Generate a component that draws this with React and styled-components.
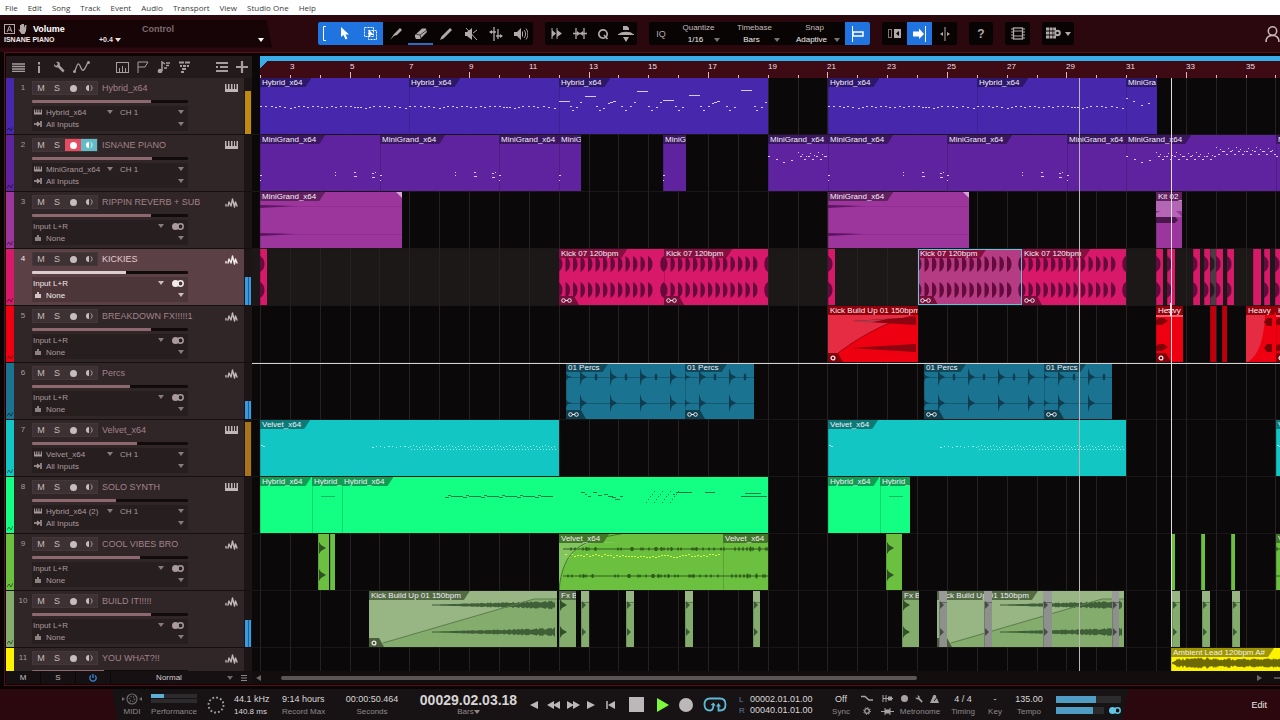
import React, { useEffect, useState } from 'react';
import styled, { createGlobalStyle } from 'styled-components';

const BAR = 448 / 15;
const FIRST_BAR = 2;
const TIMELINE_LEFT = 260;
const barX = bar => Math.round((bar - FIRST_BAR) * BAR);
const countBars = () => Math.floor((window.innerWidth - TIMELINE_LEFT) / BAR) + 1;
const noise = i => Math.abs(Math.sin(i * 12.9898) * 43758.5453) % 1;

/* ---------- data ---------- */

const menus = ['File', 'Edit', 'Song', 'Track', 'Event', 'Audio', 'Transport', 'View', 'Studio One', 'Help'];

const tracks = [
  { name: 'Hybrid_x64', color: '#4727ab', midi: 'Hybrid_x64', volume: 76, meter: 43, meterColor: '#c08a12' },
  { name: 'ISNANE PIANO', color: '#5f239f', midi: 'MiniGrand_x64', volume: 77, armed: true },
  { name: 'RIPPIN REVERB + SUB', color: '#9c359c', volume: 76 },
  { name: 'KICKIES', color: '#d81868', volume: 60, selected: true, meter: 28, meterColor: '#3a9ae0' },
  { name: 'BREAKDOWN FX!!!!!1', color: '#ee0010', volume: 76 },
  { name: 'Percs', color: '#1a7491', volume: 63, meter: 18, meterColor: '#3a9ae0' },
  { name: 'Velvet_x64', color: '#12c6c3', midi: 'Velvet_x64', volume: 67, meter: 54, meterColor: '#a8741a' },
  { name: 'SOLO SYNTH', color: '#13ff84', midi: 'Hybrid_x64 (2)', volume: 54 },
  { name: 'COOL VIBES BRO', color: '#6bc040', volume: 69 },
  { name: 'BUILD IT!!!!!', color: '#84ac6d', volume: 76, meter: 27, meterColor: '#3a9ae0' },
  { name: 'YOU WHAT?!!', color: '#fdf200', volume: 46 },
];

// start and end are distances from bar 2
const clip = (start, end, label, art, extra) => ({ start, end, label, art, ...extra });

const lanes = [
  [
    clip(0, 149, 'Hybrid_x64', 'arp'),
    clip(149, 299, 'Hybrid_x64', 'arp'),
    clip(299, 508, 'Hybrid_x64', 'lead'),
    clip(568, 717, 'Hybrid_x64', 'arp'),
    clip(717, 866, 'Hybrid_x64', 'arp'),
    clip(866, 897, 'MiniGra', 'sparse'),
  ],
  [
    clip(0, 120, 'MiniGrand_x64', 'chords'),
    clip(120, 239, 'MiniGrand_x64', 'chords'),
    clip(239, 299, 'MiniGrand_x64', 'chords'),
    clip(299, 321, 'MiniG', 'chords'),
    clip(403, 426, 'MiniG', 'chords'),
    clip(508, 568, 'MiniGrand_x64', 'melody'),
    clip(568, 687, 'MiniGrand_x64', 'chords'),
    clip(687, 807, 'MiniGrand_x64', 'chords'),
    clip(807, 866, 'MiniGrand_x64', 'chords'),
    clip(866, 1016, 'MiniGrand_x64', 'melody'),
    clip(1016, 1120, 'MiniGrand_x64', 'melody'),
  ],
  [
    clip(0, 142, 'MiniGrand_x64', 'tail'),
    clip(568, 709, 'MiniGrand_x64', 'tail'),
    clip(896, 922, 'Kit 02_', 'hit'),
  ],
  [
    clip(0, 7, '', 'bump'),
    clip(299, 404, 'Kick 07 120bpm', 'kicks', { badge: 'link' }),
    clip(404, 508, 'Kick 07 120bpm', 'kicks', { badge: 'link' }),
    clip(568, 575, '', 'bump'),
    clip(658, 762, 'Kick 07 120bpm', 'kicks', { badge: 'link', selected: true }),
    clip(762, 866, 'Kick 07 120bpm', 'kicks', { badge: 'link' }),
    clip(896, 903, '', 'bump'),
    clip(907, 915, '', 'bump'),
    clip(933, 940, '', 'bump'),
    clip(944, 950, '', 'bump'),
    clip(950, 956, '', 'bump', { muted: true }),
    clip(956, 963, '', 'bump'),
    clip(967, 974, '', 'bump'),
    clip(993, 1001, ''),
    clip(1004, 1010, '', 'bump'),
    clip(1015, 1024, '', 'bump'),
  ],
  [
    clip(568, 658, 'Kick Build Up 01 150bpm', 'riser', { badge: 'loop' }),
    clip(896, 923, 'Heavy', 'stab', { badge: 'loop' }),
    clip(950, 956, '', null, { dim: true }),
    clip(962, 967, '', null, { dim: true }),
    clip(986, 1016, 'Heavy', 'stabFade'),
    clip(1016, 1060, 'Heavy', 'stab', { badge: 'loop' }),
  ],
  [
    clip(306, 425, '01 Percs', 'percs', { badge: 'link' }),
    clip(425, 494, '01 Percs', 'percs', { badge: 'link' }),
    clip(664, 784, '01 Percs', 'percs', { badge: 'link' }),
    clip(784, 852, '01 Percs', 'percs', { badge: 'link' }),
  ],
  [
    clip(0, 299, 'Velvet_x64', 'pads'),
    clip(568, 866, 'Velvet_x64', 'pads'),
    clip(1016, 1100, 'Velvet_x64', 'pads'),
  ],
  [
    clip(0, 52, 'Hybrid_x64'),
    clip(52, 82, 'Hybrid_', 'hold'),
    clip(82, 508, 'Hybrid_x64', 'solo'),
    clip(568, 620, 'Hybrid_x64'),
    clip(620, 650, 'Hybrid_', 'hold'),
  ],
  [
    clip(58, 69, '', 'burst'),
    clip(70, 75, ''),
    clip(299, 463, 'Velvet_x64', 'velvetFade'),
    clip(463, 508, 'Velvet_x64', 'velvet'),
    clip(626, 642, '', 'burst'),
    clip(911, 915, ''),
    clip(941, 945, ''),
    clip(971, 975, ''),
    clip(1016, 1060, 'Velvet_x64', 'velvet'),
  ],
  [
    clip(109, 297, 'Kick Build Up 01 150bpm', 'build', { badge: 'loop' }),
    clip(299, 316, 'Fx B', 'burst'),
    clip(321, 329, '', 'chop'),
    clip(366, 374, '', 'chop'),
    clip(425, 433, '', 'chop'),
    clip(493, 500, '', 'chop'),
    clip(642, 659, 'Fx B', 'burst'),
    clip(677, 864, 'Kick Build Up 01 150bpm', 'build', { badge: 'loop' }),
    clip(679, 687, '', 'chop', { muted: true }),
    clip(724, 732, '', 'chop', { muted: true }),
    clip(783, 792, '', 'chop', { muted: true }),
    clip(852, 859, '', 'chop', { muted: true }),
    clip(912, 920, '', 'chop'),
    clip(942, 950, '', 'chop'),
    clip(972, 980, '', 'chop'),
  ],
  [clip(911, 1100, 'Ambient Lead 120bpm A#', 'ambient')],
];

/* ---------- clip drawings ---------- */

const ARP = [
  [0, 28], [5, 28], [11, 28], [15, 29], [19, 28], [24, 29], [30, 30], [34, 29], [38, 28], [43, 28], [47, 29],
  [52, 28], [57, 28], [61, 29], [66, 29], [71, 28], [75, 29], [80, 28], [85, 28], [90, 28], [94, 29], [97, 29],
  [100, 29], [105, 30], [109, 29], [113, 28], [119, 28], [124, 28], [128, 29], [134, 28], [139, 29], [145, 30],
];

const LEAD = [
  [0, 23, 11], [11, 28], [13, 32], [17, 29], [21, 24], [26, 18, 11], [37, 28], [40, 32], [44, 30], [49, 25],
  [51, 24, 3], [54, 23, 3], [62, 28], [66, 32], [71, 28], [75, 24], [78, 13, 11], [89, 28], [92, 32], [97, 29],
  [101, 24], [104, 22, 11], [116, 28], [119, 32], [123, 29], [130, 17, 11], [141, 28], [144, 32], [149, 28],
  [153, 25], [155, 24, 3], [158, 23, 3], [167, 28], [170, 32], [175, 29], [182, 12, 11], [195, 28], [197, 32],
  [202, 29], [206, 24],
];

const CHORDS = [
  [0, 40], [0, 45, 1], [75, 37, 1], [75, 40, 1], [94, 37], [94, 41, 3], [112, 38], [112, 42, 3], [115, 37, 1],
];

const MELODY = [[0, 21], [8, 24], [15, 27], [23, 25]];
for (let i = 0; i < 30; i += 1) {
  const lift = i > 14 ? -5 : 0;
  MELODY.push([30 + i * 4, 17 + lift + ((i * 2) % 5), 1], [32 + i * 4, 21 + lift + ((i * 3) % 6), 2]);
}

const PADS = [[1, 25], [3, 26]];
for (let i = 0; i < 10; i += 1) PADS.push([112 + i * 4, 26 + (i % 3 ? 0 : 1), i % 4 ? 1 : 2]);
for (let i = 0; i < 49; i += 1) {
  PADS.push([150 + i * 3, 26 - (i % 4 === 1 ? 1 : 0) + (i % 4 === 3 ? 1 : 0), 1], [151 + i * 3, 29, 1]);
}

const SOLO = [];
for (let i = 0; i < 18; i += 1) SOLO.push([103 + i * 6, 19 + (i % 3 ? 0 : 1), 4], [106 + i * 6, i % 3 ? 19 : 18, 3]);
SOLO.push([239, 15, 4], [243, 17, 2], [246, 19, 3], [251, 15, 4], [256, 18, 4], [262, 17, 4], [266, 19, 5]);
SOLO.push([270, 20, 4], [273, 22, 5], [278, 19, 3], [334, 15, 16], [331, 17, 2], [363, 15, 10], [399, 19, 26], [403, 16, 16]);
for (let i = 0; i < 4; i += 1) {
  [25, 22, 19, 17, 14].forEach((y, j) => SOLO.push([304 + i * 8 + j * 2, y, 1]));
}

const Notes = ({ notes, color = '#d9c8ff' }) =>
  notes.map(([x, y, w = 2], i) => <rect key={i} x={x} y={y} width={w} height="1" fill={color} />);

// symmetric wave outline around a centre line
const wave = (x0, x1, y, amp) => {
  let top = `M${x0} ${y}`;
  let bottom = '';
  for (let x = x0; x <= x1; x += 1) {
    const a = amp(x, (x - x0) / (x1 - x0));
    top += `L${x} ${y - a}`;
    bottom = `L${x} ${y + a}${bottom}`;
  }
  return `${top}${bottom}Z`;
};

const drawings = {
  arp: () => <Notes notes={ARP} />,
  lead: () => <Notes notes={LEAD} />,
  sparse: () => <Notes notes={[[0, 20], [7, 23], [15, 27], [22, 25]]} />,
  chords: () => <Notes notes={CHORDS} />,
  melody: () => <Notes notes={MELODY} />,
  pads: () => <Notes notes={PADS} color="#98f5f2" />,
  hold: () => <Notes notes={[[9, 19, 14]]} color="#0bb862" />,
  solo: () => <Notes notes={SOLO} color="#0a7a45" />,
  tail: w => (
    <>
      {[14, 42].map(y => (
        <g key={y}>
          <path d={`M0 ${y - 1}L36 ${y}L0 ${y + 2}Z`} fill="#5c1560" />
          <path d={`M30 ${y + 0.5}H${w}`} stroke="#8a2a8b" strokeWidth="0.6" />
        </g>
      ))}
      <path d={`M${w - 6} 0H${w}V6Z`} fill="#d7a3d8" />
      <path d="M0 0H5L0 5Z" fill="#d7a3d8" />
    </>
  ),
  hit: w => (
    <>
      <rect y="9" width={w} height="10" fill="#b366b4" />
      <path d={`M0 25V21L5 19H${w - 6}L${w} 25Z`} fill="#b366b4" />
      <path d={`M0 25H${w - 7}L${w - 4} 28L${w - 7} 31H0Z`} fill="#4a164e" />
    </>
  ),
  kicks: w => (
    <g fill="#650a3c">
      {[15, 41].map(y => (
        <g key={y}>
          {Array.from({ length: 13 }, (_, i) => (
            <path key={i} d={`M${i * 7.5 - 1} ${y - 8}C${i * 7.5 + 5} ${y - 5} ${i * 7.5 + 5} ${y + 5} ${i * 7.5 - 1} ${y + 8}Z`} />
          ))}
          <path d={`M${w} ${y - 8}C${w - 5} ${y - 6} ${w - 5} ${y + 6} ${w} ${y + 8}Z`} />
        </g>
      ))}
    </g>
  ),
  bump: () => (
    <g fill="#650a3c">
      {[15, 41].map(y => (
        <path key={y} d={`M0 ${y - 8}C6 ${y - 5} 6 ${y + 5} 0 ${y + 8}Z`} />
      ))}
    </g>
  ),
  riser: w => (
    <>
      <path d={`M0 9H${w - 3}C60 14 30 32 10 47L0 56Z`} fill="#e52c42" />
      <path d={`M24 15L${w - 2} 11V19Z`} fill="#8c0510" />
      <path d={`M22 42L${w - 2} 38V46Z`} fill="#8c0510" />
      <path d={`M${w - 3} 10C60 14 30 32 10 47`} stroke="#8c0510" fill="none" strokeWidth="0.8" />
      <path d="M24 15L60 13L40 17Z" fill="#b3384a" />
    </>
  ),
  stab: () => (
    <>
      <rect y="9" width="27" height="2" fill="#f2606c" />
      {[16, 42].map(y => (
        <path key={y} d={`M0 ${y - 2}L3 ${y - 4}H8L12 ${y - 1}L6 ${y + 3}H0Z`} fill="#83000a" />
      ))}
    </>
  ),
  stabFade: () => (
    <>
      <path d="M0 9H19C18 30 14 48 2 56H0Z" fill="#e52c42" />
      {[16, 42].map(y => (
        <path key={y} d={`M18 ${y}L21 ${y - 4}H26V${y + 4}H21Z`} fill="#7a0008" />
      ))}
    </>
  ),
  percs: w => (
    <g fill="#103d50">
      {[14, 40].map(y => (
        <g key={y}>
          <path d={`M0 ${y - 4}L2 ${y - 1}L6 ${y}L2 ${y + 1}L0 ${y + 4}Z`} />
          {[14, 44, 74, 104].map(x => (
            <path key={x} d={`M${x} ${y - 9}L${x + 2} ${y - 3}L${x + 7} ${y}L${x + 2} ${y + 3}L${x} ${y + 9}Z`} />
          ))}
          <rect y={y} width={w} height="0.5" />
        </g>
      ))}
      {[30, 60, 90].map(x => (
        <ellipse key={x} cx={x} cy="14" rx="1.3" ry="3.5" />
      ))}
    </g>
  ),
  velvet: w => (
    <path d={wave(0, w, 15, x => (noise(x) > 0.75 ? 2.5 : 0.6)) + wave(0, w, 42, x => (noise(x + 3) > 0.75 ? 2.5 : 0.6))} fill="#315c1b" />
  ),
  velvetFade: w => (
    <>
      <path d="M0 9H62C25 4 5 15 0 56Z" fill="#83c561" />
      <path d={wave(4, w, 15, x => (noise(x) > 0.8 ? 2 : 0.6)) + wave(4, w, 42, x => (noise(x + 3) > 0.8 ? 2 : 0.6))} fill="#315c1b" />
      {Array.from({ length: 52 }, (_, i) => (
        <rect key={i} x={6 + i * 3} y={20 + Math.round(noise(i) * 3)} width="2" height="1" fill="#d4fa3c" />
      ))}
      <path d="M0 56C4 15 22 6 62 0" stroke="#45772b" fill="none" />
    </>
  ),
  burst: () => (
    <g fill="#2f4f27">
      {[14, 41].map(y => (
        <path key={y} d={`M1 ${y - 6}L3 ${y - 3}L8 ${y}L3 ${y + 3}L1 ${y + 6}Z`} />
      ))}
    </g>
  ),
  build: w => (
    <>
      <path d={`M0 0H${w}V8H165L14 52H0Z`} fill="#98b584" />
      <path
        d={wave(63, w - 2, 14, (x, t) => 0.4 + t * (2 + noise(x) * 2.4)) + wave(63, w - 2, 41, (x, t) => 0.4 + t * (2 + noise(x + 9) * 2.4))}
        fill="#3f5f38"
      />
      <path d={`M14 52L165 8H${w}`} stroke="#5c7c4c" fill="none" />
    </>
  ),
  chop: w => (
    <>
      <rect width={w} height="11" fill="#98b584" />
      <rect y="11" width={w} height="1" fill="#5c7c4c" />
      {[14, 41].map(y => (
        <path key={y} d={`M1 ${y - 4}L5 ${y}L1 ${y + 4}Z`} fill="#3c5a35" />
      ))}
    </>
  ),
  ambient: w => <path d={wave(1, w, 15, x => (x < 6 ? x / 2 : 2.5 + noise(x) * 3 * (x < 60 ? 1 : 0.7)))} fill="#6d6a06" />,
};

/* ---------- icons ---------- */

const Svg = ({ w = 14, h = 14, box, children }) => (
  <svg width={w} height={h} viewBox={box || `0 0 ${w} ${h}`} fill="none" stroke="currentColor" aria-hidden="true">
    {children}
  </svg>
);

const fill = { fill: 'currentColor', stroke: 'none' };

const Caret = () => <Svg w={6} h={4}><path d="M0 0H6L3 4Z" {...fill} /></Svg>;
const PianoIcon = ({ w = 13, h = 8 }) => (
  <Svg w={w} h={h} box="0 0 13 8">
    <path d="M0 0H1.500V5H3V0H4.500V5H6V0H7.500V5H9V0H10V5H11.500V0H13V8H0Z" {...fill} />
  </Svg>
);
const WaveIcon = () => (
  <Svg w={13} h={11}>
    <path d="M1 8V6.5M3 8L4 4L6 8L7.5 1L9.500 9L10.500 4L12 8" strokeWidth="1.4" strokeLinejoin="round" strokeLinecap="round" />
  </Svg>
);
const InIcon = () => <Svg w={8} h={6}><path d="M0 3H5M3 1L5.5 3L3 5" strokeWidth="1.4" /><path d="M7 0V6" strokeWidth="1.5" /></Svg>;
const OutIcon = () => <Svg w={6} h={6}><path d="M1 2V6M3 0V6M5 2V6" strokeWidth="1.6" /></Svg>;
const StereoIcon = () => (
  <Svg w={12} h={7}><circle cx="3.5" cy="3.5" r="3.5" {...fill} /><circle cx="8.5" cy="3.5" r="2.7" strokeWidth="1.5" /></Svg>
);
const RecordIcon = () => <Svg w={7} h={7}><circle cx="3.5" cy="3.5" r="3.5" {...fill} /></Svg>;
const MonitorIcon = () => (
  <Svg w={8} h={8}><path d="M4 1A3 3 0 0 0 4 7Z" {...fill} /><path d="M5.5 1.2A3.2 3.2 0 0 1 5.5 6.8" strokeWidth="0.8" /></Svg>
);
const WrenchIcon = ({ size = 12 }) => (
  <Svg w={size} h={size} box="0 0 12 12">
    <path d="M1 3L3 5L5 3L3.2 1C6 0 7.5 2 6.8 4.5L11.5 9.5L10 11.5L5 6.5C2.5 7 .5 5.5 1 3Z" {...fill} />
  </Svg>
);

const headerIcons = [
  ['Track list', <Svg w={13} h={9}><path d="M0 1H13M0 3.5H13M0 6H13M0 8.5H13" strokeWidth="1.3" /></Svg>],
  ['Inspector', <Svg w={4} h={11}><path d="M2 4V11M2 0V2.5" strokeWidth="2" /></Svg>],
  ['Tools', <WrenchIcon size={12} />],
  ['Automation', <Svg w={17} h={12}><path d="M2 10C5 0 6 2 8 7S12 8 15 1" strokeWidth="1.3" /><circle cx="1.5" cy="10.5" r="1.5" {...fill} /><circle cx="15.5" cy="1.5" r="1.5" {...fill} /></Svg>],
];
const headerIconsMid = [
  ['Ruler track', <Svg w={13} h={11}><rect x=".5" y=".5" width="12" height="10" /><path d="M3.5 10V6M6.5 10V4M9.5 10V6" /></Svg>],
  ['Marker track', <Svg w={12} h={12}><path d="M1 12V1H11L8 6H1" /></Svg>],
  ['Chord track', <Svg w={13} h={12}><path d="M5 10V1L8 3M7 7H10M9 2H13M9 4.500H12" strokeWidth="1.5" /><circle cx="3" cy="10" r="2.3" {...fill} /></Svg>],
  ['Arranger track', <Svg w={11} h={12}><path d="M0 1.500H5M6 1.500H11M1 5H3M4 5H7M8 5H10M3 8H7M2 11H5" strokeWidth="2.2" /></Svg>],
];
const headerIconsEnd = [
  ['Track layers', <Svg w={12} h={10}><path d="M0 1H12M0 9H12M4 5H12M0 5H2" strokeWidth="1.8" /></Svg>],
  ['Add track', <Svg w={12} h={12}><path d="M6 0V12M0 6H12" strokeWidth="2.2" /></Svg>],
];

const toolIcons = [
  ['Split', <Svg><path d="M1 13L5 7L11 1L13 3L8 8L5 9Z" {...fill} /></Svg>],
  ['Eraser', <Svg><path d="M1 8L8 1.5H12L13 5L6 12H2L1 10Z" {...fill} /><path d="M2 7L6 8L13 3M6 8L7 11" stroke="#191314" strokeWidth="0.7" /></Svg>],
  ['Paint', <Svg><path d="M1 13L2.5 9.5L11 1L13 3L4.5 11.5Z" {...fill} /></Svg>],
  ['Mute', <Svg><path d="M1 5H3L8 1V13L3 9H1Z" {...fill} /><path d="M2 1L13 13M9 6L13 3" /></Svg>],
  ['Bend', <Svg><path d="M5 0V14M9 2V12M1 5H7M7 9H13" strokeWidth="1.3" /><path d="M0 5L3 3V7ZM14 9L11 7V11Z" {...fill} /></Svg>],
  ['Listen', <Svg><path d="M0 5H3L7 1V13L3 9H0Z" {...fill} /><path d="M8.5 4.5V9.5M10 3C12 5 12 9 10 11M12 1.5C14.5 5 14.5 9 12 12.5" /></Svg>],
];

const actionIcons = [
  ['Strip silence', <Svg w={12} h={13}><path d="M1 1V12M6 1V12" /><path d="M1 3L5 6.5L1 10ZM6 3L11 6.5L6 10Z" {...fill} /></Svg>],
  ['Stretch', <Svg><path d="M3 1V12M11 1V12M0 6.5H14" strokeWidth="1.3" /><path d="M4 4L7 6.5L4 9ZM10 4L7 6.5L10 9Z" {...fill} /></Svg>],
  ['Quantize', <Svg w={12} h={12}><circle cx="6" cy="6" r="4.2" strokeWidth="1.7" /><path d="M7 7L10.5 11" strokeWidth="1.7" /></Svg>],
  ['Macros', <Svg w={16} h={16}><path d="M5 0H9L11 2V4H5ZM1 8C3 5 13 5 15 8ZM5 11H11L8 16Z" {...fill} /><path d="M0 8.5H16" /></Svg>],
];

/* ---------- parts ---------- */

const ClipView = ({ data, color }) => {
  const width = data.end - data.start;
  return (
    <ClipBox
      $color={color}
      $selected={data.selected}
      $muted={data.muted}
      $dim={data.dim}
      style={{ left: data.start, width }}
    >
      {data.art && <ClipArt width={width} height="56">{drawings[data.art](width)}</ClipArt>}
      {data.label && <ClipLabel $color={color}>{data.label}</ClipLabel>}
      {data.badge && (
        <ClipBadge $color={color}>
          {data.badge === 'link' ? (
            <Svg w={11} h={5}><circle cx="2.5" cy="2.5" r="1.8" /><circle cx="8.5" cy="2.5" r="1.8" /><path d="M4 2.5H7" /></Svg>
          ) : (
            <Svg w={6} h={6}><circle cx="3" cy="3" r="1.9" strokeWidth="1.3" /></Svg>
          )}
        </ClipBadge>
      )}
    </ClipBox>
  );
};

const Drop = ({ label, value }) => (
  <DropBox>
    <DropSelect aria-label={label} defaultValue={value}>
      <option>{value}</option>
    </DropSelect>
    <Caret />
  </DropBox>
);

const TrackRow = ({ track, index }) => {
  const [volume, setVolume] = useState(track.volume);
  return (
    <Row $selected={track.selected}>
      <ColorStrip $color={track.color}>
        <Svg w={6} h={5}><path d="M0 4L2 1L4 4L6 0" strokeWidth="0.8" /></Svg>
      </ColorStrip>
      <TrackNumber>{index + 1}</TrackNumber>
      <TrackMain>
        <TrackTop>
          <ButtonGroup>
            <TrackButton aria-label="Mute">M</TrackButton>
            <TrackButton aria-label="Solo">S</TrackButton>
            <TrackButton aria-label="Record" $active={track.armed && '#e84a5f'}><RecordIcon /></TrackButton>
            <TrackButton aria-label="Monitor" $active={track.armed && '#62bcc8'}><MonitorIcon /></TrackButton>
          </ButtonGroup>
          <TrackName $selected={track.selected}>{track.name}</TrackName>
        </TrackTop>
        <Volume
          type="range"
          aria-label={`${track.name} volume`}
          value={volume}
          onChange={e => setVolume(e.target.value)}
          $selected={track.selected}
          style={{ '--level': `${volume}%` }}
        />
        <IoBox $selected={track.selected}>
          {track.midi ? (
            <>
              <IoLine>
                <IoIcon><PianoIcon w={8} h={6} /></IoIcon>
                <Drop label="Instrument" value={track.midi} />
                <ChannelDrop><Drop label="Channel" value="CH 1" /></ChannelDrop>
              </IoLine>
              <IoLine>
                <IoIcon><InIcon /></IoIcon>
                <Drop label="Input" value="All Inputs" />
              </IoLine>
            </>
          ) : (
            <>
              <IoLine>
                <Drop label="Input" value="Input L+R" />
                <StereoButton aria-label="Stereo"><StereoIcon /></StereoButton>
              </IoLine>
              <IoLine>
                <IoIcon><OutIcon /></IoIcon>
                <Drop label="Output" value="None" />
              </IoLine>
            </>
          )}
        </IoBox>
      </TrackMain>
      <TrackKind $selected={track.selected}>{track.midi ? <PianoIcon /> : <WaveIcon />}</TrackKind>
      <MeterSlot>
        {track.meter && <Meter $color={track.meterColor} $stereo={!track.midi} style={{ height: track.meter }} />}
      </MeterSlot>
    </Row>
  );
};

const IconRow = ({ icons }) => icons.map(([label, icon]) => <HeaderButton key={label} aria-label={label}>{icon}</HeaderButton>);

const Toolbar = () => (
  <ToolbarBox>
    <ParamPanel>
      <ParamLine>
        <Svg w={11} h={10}><rect x=".5" y=".5" width="10" height="9" /><path d="M3 8L5.5 2L8 8M4 6H7" /></Svg>
        <Svg w={9} h={10}><path d="M0 5L2 6V1H3.3V4V0H4.7V4V0H6V4L7 1H8.5L8 7L6.5 10H3.5Z" {...fill} /></Svg>
        <strong>Volume</strong>
        <ParamControl>Control</ParamControl>
      </ParamLine>
      <ParamLine>
        <ParamTrack>ISNANE PIANO</ParamTrack>
        <ParamValue>+0.4 <Caret /></ParamValue>
        <ParamMenu aria-label="Parameter menu"><Caret /></ParamMenu>
      </ParamLine>
    </ParamPanel>
    <ToolGroups>
      <Group>
        <ArrowTools>
          <Svg w={3} h={15}><path d="M3 .5H.5V14.5H3" /></Svg>
          <PlainButton aria-label="Arrow tool">
            <Svg w={9} h={13}><path d="M0 0V10L2.5 8L4.5 12.5L6.5 11.5L4.5 7.5H8Z" {...fill} /></Svg>
          </PlainButton>
          <PlainButton aria-label="Range tool">
            <Svg w={14} h={13}><rect x=".5" y=".5" width="9" height="9" strokeDasharray="2 1" /><rect x="4.5" y="3.5" width="8" height="9" strokeDasharray="2 1" /><path d="M5 3V10L7 8H10Z" {...fill} /></Svg>
          </PlainButton>
        </ArrowTools>
        {toolIcons.map(([label, icon]) => (
          <Tool key={label} aria-label={label} $underline={label === 'Eraser'}>{icon}</Tool>
        ))}
      </Group>
      <Group>
        {actionIcons.map(([label, icon]) => <SmallTool key={label} aria-label={label}>{icon}</SmallTool>)}
      </Group>
      <Group>
        <Iq>IQ</Iq>
        <Setting $width={52}><span>Quantize</span><Drop label="Quantize" value="1/16" /></Setting>
        <Setting $width={60}><span>Timebase</span><Drop label="Timebase" value="Bars" /></Setting>
        <Setting $width={60}><span>Snap</span><Drop label="Snap" value="Adaptive" /></Setting>
        <Tool aria-label="Snap" $on><Svg w={14} h={16}><path d="M1.5 0V16" /><rect x="2" y="6" width="10" height="4" strokeWidth="1.5" /></Svg></Tool>
      </Group>
      <Group>
        <Tool aria-label="Pre roll"><Svg w={13} h={9}><rect x=".5" y=".5" width="3" height="8" opacity="0.7" /><rect x="6" y="0" width="7" height="9" {...fill} /><path d="M11 2L8 4.5L11 7Z" fill="#080404" stroke="none" /></Svg></Tool>
        <Tool aria-label="Autoscroll" $on><Svg w={14} h={16}><path d="M0 5.5H6V2.5L11 8L6 13V10.5H0Z" {...fill} /><path d="M12.5 0V16" /></Svg></Tool>
        <Tool aria-label="Cursor follow"><Svg w={10} h={14}><path d="M5 0V14" /><path d="M0 7L3 5V9ZM10 7L7 5V9Z" {...fill} /></Svg></Tool>
      </Group>
      <Group><Help aria-label="Help">?</Help></Group>
      <Group><Tool aria-label="Video"><Svg w={14} h={13}><rect x="2.5" y="1" width="9" height="11" strokeWidth="1.3" /><path d="M1 1V12M13 1V12" strokeDasharray="2 1" /><path d="M2 4H12M2 9H12" /></Svg></Tool></Group>
      <Group>
        <WideTool aria-label="Pads">
          <Svg w={15} h={13}><path d="M0 2H10M0 6H8M0 10H10" strokeWidth="3" strokeDasharray="3 .6" /><circle cx="11.5" cy="6" r="2.3" strokeWidth="2" /></Svg>
          <Caret />
        </WideTool>
      </Group>
    </ToolGroups>
    <UserButton aria-label="Account">
      <Svg w={15} h={16}><circle cx="7.5" cy="5" r="4.2" strokeWidth="1.5" /><path d="M1 16C1 11 4 9.5 7.5 9.5S14 11 14 16" strokeWidth="1.5" /></Svg>
    </UserButton>
  </ToolbarBox>
);

const Ruler = ({ bars }) => (
  <RulerBox>
    <RulerScale>
      {bars.map(bar => (
        <Tick key={bar} $tall={bar % 4 === 1} style={{ left: barX(bar) }}>
          {bar % 2 === 1 && <span>{bar}</span>}
        </Tick>
      ))}
    </RulerScale>
  </RulerBox>
);

const Timeline = () => {
  const [barCount, setBarCount] = useState(countBars);

  useEffect(() => {
    const onResize = () => setBarCount(countBars());
    window.addEventListener('resize', onResize);
    return () => window.removeEventListener('resize', onResize);
  }, []);

  const bars = Array.from({ length: barCount }, (_, i) => i + FIRST_BAR);

  return (
    <TimelineBox>
      <Ruler bars={bars} />
      <Lanes>
        <Grid>
          {bars.map(bar => <GridLine key={bar} style={{ left: barX(bar) }} />)}
        </Grid>
        {lanes.map((clips, i) => (
          <Lane key={tracks[i].name} $selected={tracks[i].selected}>
            <LaneCanvas>
              {clips.map(c => <ClipView key={c.start} data={c} color={tracks[i].color} />)}
            </LaneCanvas>
          </Lane>
        ))}
        <CrossLine />
        <Playhead style={{ left: 827 }} />
        <EditCursor style={{ left: 919 }} />
        <Crosshair><Svg w={9} h={13}><path d="M4.5 0V13M1 6.5H8" stroke="#f3d9d9" /></Svg></Crosshair>
      </Lanes>
      <ScrollBar>
        <ScrollArrow aria-label="Scroll left"><Svg w={5} h={6}><path d="M5 0V6L0 3Z" {...fill} /></Svg></ScrollArrow>
        <ScrollTrack><ScrollThumb /></ScrollTrack>
        <ScrollArrow aria-label="Scroll right"><Svg w={5} h={6}><path d="M0 0V6L5 3Z" {...fill} /></Svg></ScrollArrow>
        <ScrollArrow aria-label="Zoom"><Svg w={6} h={6}><path d="M0 3H6" strokeWidth="1.5" /></Svg></ScrollArrow>
      </ScrollBar>
    </TimelineBox>
  );
};

const transportButtons = [
  ['Previous bar', 18, <Svg w={8} h={8}><path d="M8 0V8L0 4Z" {...fill} /></Svg>],
  ['Rewind', 20, <Svg w={13} h={8}><path d="M7 0V8L0 4ZM13 0V8L6 4Z" {...fill} /></Svg>],
  ['Forward', 20, <Svg w={13} h={8}><path d="M0 0V8L7 4ZM6 0V8L13 4Z" {...fill} /></Svg>],
  ['Next bar', 16, <Svg w={8} h={8}><path d="M0 0V8L8 4Z" {...fill} /></Svg>],
  ['Return to zero', 22, <Svg w={9} h={8}><path d="M9 0V8L2 4Z" {...fill} /><path d="M1 0V8" strokeWidth="1.5" /></Svg>],
  ['Stop', 30, <Svg w={15} h={15}><rect width="15" height="15" {...fill} /></Svg>],
  ['Play', 24, <Svg w={12} h={14}><path d="M0 0V14L12 7Z" fill="#7dfa3c" stroke="none" /></Svg>],
  ['Record', 22, <Svg w={14} h={14}><circle cx="7" cy="7" r="7" {...fill} /></Svg>],
  ['Loop', 36, <Svg w={24} h={16}><path d="M7 13.500C3 13.500 1.500 11 1.500 7.500S3 1.500 7 1.500H17C21 1.500 22.500 4 22.500 7.500S21 13.500 17 13.500H15.500V8M7 13.500C9 13.500 10.500 11 10.500 7" stroke="#5fb9d6" strokeWidth="1.8" /><path d="M7.500 8L10.500 5.500L12.500 9ZM13 9.500L15.500 6L18 9.500Z" fill="#5fb9d6" stroke="none" /></Svg>],
];

const Transport = () => (
  <TransportBar>
    <TransportPanel>
      <Cell $width={36} $muted>
        <Svg w={20} h={12}><circle cx="10" cy="6" r="5" strokeWidth="1.2" /><path d="M0 4L3 6L0 8ZM20 4L17 6L20 8Z" {...fill} /><circle cx="10" cy="6" r="2.5" strokeDasharray="1 1.5" strokeWidth="1.5" /></Svg>
        <span>MIDI</span>
      </Cell>
      <Cell $width={48}>
        <LoadBars><LoadBar $level={28} /><LoadBar $level={0} /></LoadBars>
        <span>Performance</span>
      </Cell>
      <Spinner><Svg w={18} h={18}><circle cx="9" cy="9" r="7.5" strokeWidth="1.8" strokeDasharray="1.8 2.127" /></Svg></Spinner>
      <Cell $width={48} $left><b>44.1 kHz</b><em>140.8 ms</em></Cell>
      <Cell $width={56} $left><b>9:14 hours</b><span>Record Max</span></Cell>
      <Cell $width={68}><b>00:00:50.464</b><span>Seconds</span></Cell>
      <Cell $width={125}><Position>00029.02.03.18</Position><BarsLabel>Bars<Caret /></BarsLabel></Cell>
      <Buttons>
        {transportButtons.map(([label, width, icon]) => (
          <TransportButton key={label} aria-label={label} $width={width}>{icon}</TransportButton>
        ))}
      </Buttons>
      <Locators>
        <i>L</i><b>00002.01.01.00</b>
        <i>R</i><b>00040.01.01.00</b>
      </Locators>
      <Cell $width={28}><b>Off</b><span>Sync</span></Cell>
      <IconCell $width={24}>
        <Svg w={12} h={7}><path d="M0 1.5H4L8 5H12" strokeWidth="1.5" /></Svg>
        <Svg w={8} h={8}><circle cx="4" cy="4" r="2.3" strokeWidth="1.3" /><circle cx="4" cy="4" r="3.5" strokeDasharray="1 1.75" /></Svg>
      </IconCell>
      <IconCell $width={16}>
        <Svg w={11} h={7}><path d="M1 0V7M4 0V7M1 3.5H11" /><path d="M6 1.5H10V5.5H6Z" {...fill} /></Svg>
        <Svg w={13} h={7}><path d="M0 3.5H13M4 0V7M9 0V7" /><path d="M4 1.5H9V5.5H4Z" {...fill} /></Svg>
      </IconCell>
      <Cell $width={50}>
        <IconLine><RecordIcon /><WrenchIcon size={8} /><Svg w={9} h={8}><path d="M0 8L3.5 0H5.5L9 8Z" {...fill} /><path d="M4 6L8 1" stroke="#181415" /></Svg></IconLine>
        <span>Metronome</span>
      </Cell>
      <Cell $width={36}><b>4 / 4</b><span>Timing</span></Cell>
      <Cell $width={28}><b>-</b><span>Key</span></Cell>
      <Cell $width={40}><b>135.00</b><span>Tempo</span></Cell>
      <Output>
        <OutputBar $level={62} />
        <OutputLine><OutputBar $level={78} /><StereoIcon /></OutputLine>
      </Output>
    </TransportPanel>
    <EditButton>Edit</EditButton>
  </TransportBar>
);

const App = () => (
  <>
    <GlobalStyle />
    <Window>
      <MenuBar>
        {menus.map(m => <MenuItem key={m}>{m}</MenuItem>)}
      </MenuBar>
      <Toolbar />
      <Workspace>
        <Sidebar>
          <SidebarHeader>
            <IconSet><IconRow icons={headerIcons} /></IconSet>
            <IconSet><IconRow icons={headerIconsMid} /></IconSet>
            <IconSet><IconRow icons={headerIconsEnd} /></IconSet>
          </SidebarHeader>
          <TrackList>
            {tracks.map((t, i) => <TrackRow key={t.name} track={t} index={i} />)}
          </TrackList>
          <SidebarFooter>
            <FooterButton>M</FooterButton>
            <FooterButton>S</FooterButton>
            <FooterButton $blue aria-label="Power">
              <Svg w={8} h={8}><path d="M2 1.5A3.2 3.2 0 1 0 6 1.5M4 0V4" strokeWidth="1.3" /></Svg>
            </FooterButton>
            <HeightPicker><Drop label="Track height" value="Normal" /></HeightPicker>
            <PlainButton aria-label="Options"><Svg w={6} h={6}><path d="M0 .5H6M0 3H6M0 5.5H6" /></Svg></PlainButton>
          </SidebarFooter>
        </Sidebar>
        <Timeline />
      </Workspace>
      <Transport />
    </Window>
  </>
);

export default App;

/* ---------- styles ---------- */

const GlobalStyle = createGlobalStyle`
  * { box-sizing: border-box; }
  body {
    margin: 0;
    background: #0a0405;
    color: #c9c2c3;
    font-family: "Liberation Sans", Arial, sans-serif;
    font-size: 8px;
    line-height: 10px;
  }
  button, select, input { font: inherit; color: inherit; margin: 0; }
  button { padding: 0; border: 0; background: none; }
  svg { display: block; flex-shrink: 0; }
`;

const Window = styled.div`
  height: 100vh;
  display: flex;
  flex-direction: column;
  overflow: hidden;
`;

const MenuBar = styled.nav`
  flex: 0 0 15px;
  display: flex;
  align-items: center;
  gap: 10px;
  padding-left: 5px;
  background: #fff;
`;

const MenuItem = styled.button`
  color: #3c3c3c;
  font-family: "Open Sans", "Noto Sans", sans-serif;
  font-size: 8px;
  line-height: 15px;
`;

const PlainButton = styled.button`
  display: flex;
  align-items: center;
  justify-content: center;
`;

const ToolbarBox = styled.header`
  flex: 0 0 37px;
  display: flex;
  align-items: center;
  overflow: hidden;
  background: #2b080d;
`;

const ParamPanel = styled.div`
  width: 272px;
  height: 28px;
  flex-shrink: 0;
  padding: 4px 0 0 4px;
  background: #170406;
  clip-path: polygon(0 0, 98% 0, 100% 100%, 0 100%);
`;

const ParamLine = styled.div`
  display: flex;
  align-items: center;
  gap: 3px;
  height: 11px;
  color: #b5a8a9;
  strong {
    margin-left: 3px;
    width: 106px;
    color: #fff;
    font-size: 9px;
  }
`;

const ParamControl = styled.b`
  color: #7c6c6e;
  font-size: 9px;
`;

const ParamTrack = styled.b`
  width: 92px;
  color: #f0e8e8;
  font-size: 7px;
`;

const ParamValue = styled.b`
  display: flex;
  align-items: center;
  gap: 2px;
  flex: 1;
  color: #e8e0e0;
  font-size: 7px;
`;

const ParamMenu = styled(PlainButton)`
  margin-right: 8px;
  color: #fff;
`;

const ToolGroups = styled.div`
  display: flex;
  gap: 12px;
  margin-left: 46px;
`;

const Group = styled.div`
  display: flex;
  height: 23px;
  background: #080404;
  border-radius: 2px;
  overflow: hidden;
  color: #b1a9aa;
`;

const ArrowTools = styled.div`
  display: flex;
  align-items: center;
  justify-content: space-between;
  width: 65px;
  padding: 0 5px;
  background: #1f74e0;
  color: #fff;
`;

const Tool = styled(PlainButton)`
  width: 25px;
  color: ${({ $on }) => ($on ? '#fff' : 'inherit')};
  background: ${({ $on }) => ($on ? '#1f74e0' : 'none')};
  box-shadow: ${({ $underline }) => ($underline ? 'inset 0 -2px #2c6cc4' : 'none')};
`;

const SmallTool = styled(PlainButton)`
  width: 23px;
`;

const WideTool = styled(PlainButton)`
  width: 32px;
  gap: 4px;
`;

const Help = styled(PlainButton)`
  width: 24px;
  font-size: 12px;
  font-weight: 700;
`;

const Iq = styled(PlainButton)`
  width: 24px;
  font-size: 9px;
`;

const DropBox = styled.span`
  display: flex;
  align-items: center;
  flex: 1;
  min-width: 0;
  > svg {
    opacity: 0.75;
    pointer-events: none;
  }
`;

const DropSelect = styled.select`
  flex: 1;
  min-width: 0;
  height: 11px;
  padding: 0;
  border: 0;
  appearance: none;
  background: transparent;
  line-height: 11px;
  option {
    color: #000;
  }
`;

const Setting = styled.label`
  width: ${({ $width }) => $width}px;
  padding: 1px 5px 0 4px;
  text-align: center;
  color: #c4bcbd;
  ${DropBox} {
    padding-top: 1px;
    color: #a09899;
  }
  ${DropSelect} {
    color: #f0eaea;
    text-align: center;
    text-align-last: center;
  }
`;

const UserButton = styled(PlainButton)`
  margin-left: auto;
  color: #c9b8ba;
`;

const Workspace = styled.main`
  flex: 1;
  min-height: 0;
  display: flex;
  margin: 0 0 3px 4px;
  padding: 3px 0 1px 1px;
  border: 1px solid #5a101a;
  border-right: 0;
`;

const Sidebar = styled.aside`
  width: 246px;
  flex-shrink: 0;
  display: flex;
  flex-direction: column;
`;

const SidebarHeader = styled.div`
  flex: 0 0 22px;
  display: flex;
  align-items: center;
  justify-content: space-between;
  padding: 0 4px 0 6px;
  background: #221a1b;
  color: #a79d9e;
`;

const IconSet = styled.div`
  display: flex;
  align-items: center;
  gap: 8px;
`;

const HeaderButton = styled(PlainButton)`
  min-width: 12px;
`;

const TrackList = styled.div`
  flex: 1;
  min-height: 0;
  overflow: hidden;
`;

const Row = styled.section`
  display: flex;
  height: 57px;
  border-bottom: 1px solid #150f10;
  background: ${({ $selected }) => ($selected ? '#5b4146' : '#302527')};
  color: ${({ $selected }) => ($selected ? '#f3eaeb' : '#aa9a9d')};
`;

const ColorStrip = styled.div`
  width: 8px;
  display: flex;
  align-items: flex-end;
  padding: 0 0 2px 1px;
  background: ${({ $color }) => $color};
  color: rgba(0, 0, 0, 0.6);
`;

const TrackNumber = styled.div`
  width: 18px;
  padding-top: 5px;
  text-align: center;
`;

const TrackMain = styled.div`
  width: 156px;
  padding-top: 3px;
`;

const TrackTop = styled.div`
  display: flex;
  align-items: center;
  gap: 4px;
  height: 14px;
`;

const ButtonGroup = styled.div`
  display: flex;
  flex-shrink: 0;
  border: 1px solid #43373a;
  background: #3d3133;
`;

const TrackButton = styled.button`
  width: 16px;
  height: 12px;
  display: flex;
  align-items: center;
  justify-content: center;
  color: ${({ $active }) => ($active ? '#fff' : '#c5bcbd')};
  background: ${({ $active }) => $active || 'transparent'};
  font-size: 9px;
`;

const TrackName = styled.span`
  white-space: nowrap;
  font-size: 9px;
  color: ${({ $selected }) => ($selected ? '#e3ccd0' : '#a2838a')};
`;

const Volume = styled.input`
  display: block;
  width: 100%;
  height: 3px;
  margin-top: 5px;
  appearance: none;
  border-radius: 1px;
  background: linear-gradient(
    to right,
    ${({ $selected }) => ($selected ? '#dccdd0' : '#8d686f')} var(--level),
    #120b0c var(--level)
  );
  &::-webkit-slider-thumb {
    appearance: none;
    width: 1px;
    height: 3px;
  }
`;

const IoBox = styled.div`
  margin-top: 3px;
  height: 25px;
  background: ${({ $selected }) => ($selected ? '#4c363a' : '#271e20')};
`;

const IoLine = styled.div`
  display: flex;
  align-items: center;
  height: 12px;
  padding: 0 4px 0 1px;
`;

const IoIcon = styled.span`
  width: 13px;
  display: flex;
  justify-content: center;
  flex-shrink: 0;
  padding-right: 4px;
`;

const ChannelDrop = styled.span`
  display: flex;
  width: 71px;
  padding-left: 7px;
`;

const StereoButton = styled(PlainButton)`
  margin-left: 8px;
`;

const TrackKind = styled.div`
  flex: 1;
  display: flex;
  justify-content: flex-end;
  align-items: flex-start;
  padding: 6px 6px 0 0;
  color: ${({ $selected }) => ($selected ? '#f3eaeb' : '#c0b6b7')};
`;

const MeterSlot = styled.div`
  width: 8px;
  display: flex;
  align-items: flex-end;
  padding: 0 1px;
  background: #1c1415;
`;

const Meter = styled.div`
  width: 100%;
  background: ${({ $color, $stereo }) =>
    $stereo ? `linear-gradient(to right, ${$color} 50%, #1d5f99 50%, #1d5f99 60%, ${$color} 60%)` : $color};
`;

const SidebarFooter = styled.div`
  flex: 0 0 13px;
  display: flex;
  align-items: stretch;
  padding-right: 5px;
  background: #151112;
  color: #8d8384;
`;

const FooterButton = styled(PlainButton)`
  width: 35px;
  border-right: 1px solid #0a0708;
  color: ${({ $blue }) => ($blue ? '#3a86d8' : '#c7bfc0')};
`;

const HeightPicker = styled.label`
  flex: 1;
  display: flex;
  padding-right: 8px;
  ${DropSelect} {
    color: #d2cacb;
    text-align: center;
    text-align-last: center;
  }
`;

const TimelineBox = styled.section`
  flex: 1;
  min-width: 0;
  display: flex;
  flex-direction: column;
  background: #0a0809;
`;

const RulerBox = styled.div`
  flex: 0 0 22px;
  padding-left: 8px;
`;

const RulerScale = styled.div`
  position: relative;
  height: 22px;
  overflow: hidden;
  border-top: 5px solid #37aee9;
  background: linear-gradient(135deg, #37aee9 5px, #3e0b14 5px);
`;

const Tick = styled.div`
  position: absolute;
  bottom: 0;
  width: 1px;
  height: ${({ $tall }) => ($tall ? 6 : 3)}px;
  background: #d9b9bc;
  span {
    position: absolute;
    left: 0;
    bottom: 7px;
    line-height: 9px;
    color: #eedfe0;
  }
`;

const Lanes = styled.div`
  position: relative;
  flex: 1;
  min-height: 0;
  overflow: hidden;
`;

const Grid = styled.div`
  position: absolute;
  inset: 0 0 0 8px;
  z-index: 1;
`;

const GridLine = styled.div`
  position: absolute;
  top: 0;
  bottom: 0;
  width: 1px;
  background: #252122;
`;

const Lane = styled.div`
  height: 57px;
  padding-left: 8px;
  border-bottom: 1px solid #1a1617;
  background: ${({ $selected }) => ($selected ? '#1c1817' : 'transparent')};
`;

const LaneCanvas = styled.div`
  position: relative;
  z-index: 2;
  height: 56px;
`;

const ClipBox = styled.article`
  position: absolute;
  top: 0;
  height: 56px;
  overflow: hidden;
  background: ${({ $color, $selected }) => ($selected ? '#b53c82' : $color)};
  box-shadow: inset 1px 0 rgba(0, 0, 0, 0.15);
  filter: ${({ $muted, $dim }) => ($muted ? 'grayscale(0.9) brightness(0.9)' : $dim ? 'brightness(0.8)' : 'none')};
  &::after {
    content: '';
    position: absolute;
    inset: 0;
    border: ${({ $selected }) => ($selected ? '1px solid #62c6d8' : '0')};
  }
`;

const ClipArt = styled.svg`
  position: absolute;
  inset: 0;
`;

const ClipLabel = styled.div`
  position: absolute;
  top: 0;
  left: 0;
  height: 9px;
  padding: 0 9px 0 2px;
  white-space: nowrap;
  line-height: 9px;
  color: #f4eef6;
  background: color-mix(in srgb, ${({ $color }) => $color} 62%, #000);
  clip-path: polygon(0 0, 100% 0, calc(100% - 6px) 100%, 0 100%);
`;

const ClipBadge = styled.div`
  position: absolute;
  left: 0;
  bottom: 0;
  height: 9px;
  display: flex;
  align-items: center;
  padding: 0 7px 0 2px;
  color: #f0e4ea;
  background: color-mix(in srgb, ${({ $color }) => $color} 55%, #000);
  clip-path: polygon(0 0, calc(100% - 5px) 0, 100% 100%, 0 100%);
`;

const CrossLine = styled.div`
  position: absolute;
  z-index: 3;
  top: 285px;
  left: 0;
  right: 0;
  height: 1px;
  background: #d5d2d2;
`;

const Playhead = styled.div`
  position: absolute;
  z-index: 3;
  top: 0;
  bottom: 0;
  width: 1px;
  background: #b9b4b6;
`;

const EditCursor = styled(Playhead)`
  bottom: 24px;
  background: #e2dede;
`;

const Crosshair = styled.div`
  position: absolute;
  z-index: 4;
  top: 225px;
  left: 914px;
`;

const ScrollBar = styled.div`
  flex: 0 0 13px;
  display: flex;
  align-items: center;
  gap: 12px;
  padding-left: 4px;
  background: #130e0e;
  color: #6d6566;
`;

const ScrollArrow = styled(PlainButton)`
  flex-shrink: 0;
`;

const ScrollTrack = styled.div`
  flex: 1;
  padding-left: 8px;
`;

const ScrollThumb = styled.div`
  width: 66%;
  height: 4px;
  border-radius: 2px;
  background: #5b5556;
`;

const TransportBar = styled.footer`
  flex: 0 0 31px;
  display: flex;
  align-items: center;
  justify-content: space-between;
  padding: 0 13px 0 112px;
  background: #2b080d;
`;

const TransportPanel = styled.div`
  display: flex;
  align-items: center;
  height: 31px;
  padding: 0 8px 0 2px;
  background: #171314;
  clip-path: polygon(0 0, 100% 0, calc(100% - 7px) 100%, 5px 100%);
`;

const Cell = styled.div`
  width: ${({ $width }) => $width}px;
  height: 24px;
  flex-shrink: 0;
  display: flex;
  flex-direction: column;
  justify-content: space-between;
  align-items: ${({ $left }) => ($left ? 'flex-start' : 'center')};
  color: ${({ $muted }) => ($muted ? '#6f6a6b' : '#a8a2a3')};
  white-space: nowrap;
  b {
    font-size: 9px;
    font-weight: 400;
    line-height: 12px;
    color: #dcd7d8;
  }
  em {
    font-style: normal;
    color: #dcd7d8;
  }
  span {
    color: #8f898a;
  }
`;

const IconCell = styled(Cell)`
  padding: 2px 0;
`;

const Position = styled.strong`
  font-size: 14px;
  line-height: 14px;
  color: #d8d4d5;
`;

const BarsLabel = styled.span`
  display: flex;
  align-items: center;
`;

const LoadBars = styled.div`
  width: 46px;
  display: grid;
  gap: 1px;
  padding-top: 1px;
`;

const LoadBar = styled.div`
  height: 4px;
  background: linear-gradient(to right, #5cb0d6 ${({ $level }) => $level}%, #2c2a2c ${({ $level }) => $level}%);
`;

const Spinner = styled.div`
  width: 36px;
  display: flex;
  justify-content: center;
  color: #a8a2a3;
`;

const Buttons = styled.div`
  display: flex;
  align-items: center;
  margin-left: -6px;
  color: #bcb7b8;
`;

const TransportButton = styled(PlainButton)`
  width: ${({ $width }) => $width}px;
`;

const Locators = styled.div`
  width: 94px;
  display: grid;
  grid-template-columns: 11px 1fr;
  align-items: center;
  padding-left: 6px;
  line-height: 11px;
  i {
    font-style: normal;
    color: #5e7fa0;
  }
  b {
    font-size: 9px;
    font-weight: 400;
    color: #dcd7d8;
  }
`;

const IconLine = styled.div`
  display: flex;
  align-items: center;
  gap: 7px;
  height: 12px;
`;

const Output = styled.div`
  width: 72px;
  display: grid;
  gap: 4px;
  padding-left: 7px;
  color: #5fc6e6;
`;

const OutputLine = styled.div`
  display: flex;
  align-items: center;
  gap: 5px;
`;

const OutputBar = styled.div`
  flex: 1;
  height: 7px;
  background: linear-gradient(to right, #4f9dc4 ${({ $level }) => $level}%, #2b2a2c ${({ $level }) => $level}%);
`;

const EditButton = styled.button`
  font-size: 9px;
  color: #eee6e7;
`;
